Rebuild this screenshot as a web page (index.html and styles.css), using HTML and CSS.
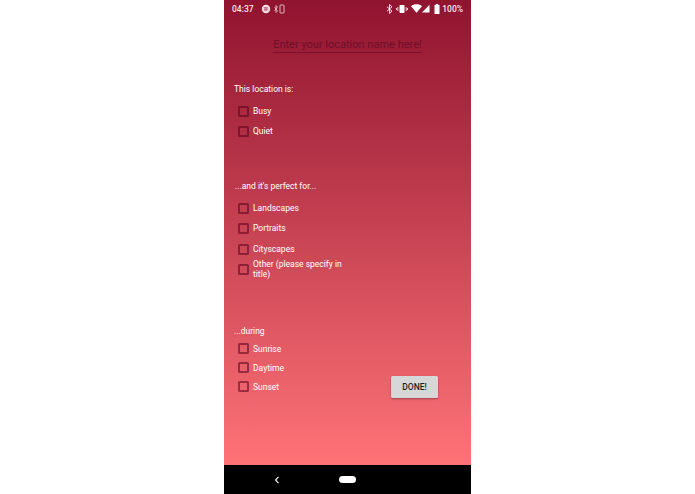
FILE: index.html
```html
<!DOCTYPE html>
<html lang="en">
<head>
    <meta charset="UTF-8">
    <meta name="viewport" content="width=device-width, initial-scale=1.0">
    <title>New location</title>
    <link rel="stylesheet" href="styles.css">
</head>
<body>
    <div class="phone">
        <div class="screen">
            <div class="status-bar">
                <div class="status-left">
                    <span class="clock">04:37</span>
                    <svg class="icon" width="10" height="10" viewBox="0 0 10 10"><circle cx="5" cy="5" r="4.2" fill="#f3dfe3"/><path d="M2.8 3.9c1.5-.4 3-.3 4.400.3M3 5.100c1.300-.3 2.600-.2 3.800.3M3.300 6.200c1-.2 2.100-.2 3 .3" stroke="#92183a" stroke-width=".7" fill="none"/></svg>
                    <svg class="icon" width="11" height="10" viewBox="0 0 11 10"><path d="M.5 3l3 4M3.500 3l-3 4M2 1.500v7l1.500-1.500M2 1.500l1.500 1.500" stroke="#f3dfe3" stroke-width=".7" fill="none"/><rect x="6" y="1" width="4" height="8" rx=".6" stroke="#f3dfe3" stroke-width=".8" fill="none"/></svg>
                </div>
                <div class="status-right">
                    <svg class="icon" width="7" height="10" viewBox="0 0 7 10"><path d="M1 2.800l5 4.400L3.500 9.500V.5L6 2.800l-5 4.400" stroke="#fff" stroke-width=".9" fill="none"/></svg>
                    <svg class="icon" width="12" height="10" viewBox="0 0 12 10"><rect x="3.500" y="1" width="5" height="8" rx=".8" fill="#fff"/><path d="M1.800 3v4M.5 4v2M10.200 3v4M11.500 4v2" stroke="#fff" stroke-width=".8"/></svg>
                    <svg class="icon" width="11" height="9" viewBox="0 0 11 9"><path d="M0 2.200C3 -.4 8 -.4 11 2.200L5.500 8.800z" fill="#fff"/></svg>
                    <svg class="icon signal" width="8" height="9" viewBox="0 0 8 9"><path d="M0 8.500L7.500 .8v7.700z" fill="#fff"/></svg>
                    <svg class="icon battery" width="6" height="10" viewBox="0 0 6 10"><path d="M1.800 0h2.400v1H5.500v9H.5V1h1.300z" fill="#fff"/></svg>
                    <span class="battery-text">100%</span>
                </div>
            </div>

            <div class="title-wrap">
                <div class="title-input">Enter your location name here!</div>
            </div>

            <div class="section section-busy">
                <p class="section-label">This location is:</p>
                <label class="check-row"><span class="box"></span>Busy</label>
                <label class="check-row"><span class="box"></span>Quiet</label>
            </div>

            <div class="section section-perfect">
                <p class="section-label label-inset">...and it's perfect for...</p>
                <label class="check-row"><span class="box"></span>Landscapes</label>
                <label class="check-row"><span class="box"></span>Portraits</label>
                <label class="check-row row-tall"><span class="box"></span>Cityscapes</label>
                <label class="check-row check-wrap"><span class="box"></span><span class="wrap-text">Other (please specify in title)</span></label>
            </div>

            <div class="section section-during">
                <p class="section-label">...during</p>
                <div class="during-body">
                    <div class="during-list">
                        <label class="check-row"><span class="box"></span>Sunrise</label>
                        <label class="check-row"><span class="box"></span>Daytime</label>
                        <label class="check-row"><span class="box"></span>Sunset</label>
                    </div>
                    <button class="done-btn">DONE!</button>
                </div>
            </div>
        </div>

        <div class="nav-bar">
            <svg class="nav-back" width="6" height="8" viewBox="0 0 6 8"><path d="M4.500 .8L1.500 4l3 3.200" stroke="#fff" stroke-width="1.100" fill="none"/></svg>
            <span class="nav-home"></span>
        </div>
    </div>
</body>
</html>
```

FILE: styles.css
```css
* {
    box-sizing: border-box;
}
body {
    margin: 0;
    height: 494px;
    overflow: hidden;
    background-color: #fff;
    font-family: Roboto, "Liberation Sans", sans-serif;
}
.phone {
    width: 247px;
    height: 494px;
    margin-left: 224px;
    display: flex;
    flex-direction: column;
}
.screen {
    height: 465px;
    background: linear-gradient(180deg, #90132f 0%, #ff7377 100%);
    color: #fff;
    font-size: 8.5px;
}
.status-bar {
    height: 17px;
    padding: 0 8px 0 8px;
    display: flex;
    justify-content: space-between;
    align-items: center;
    color: #f6e6e9;
    font-size: 8.5px;
    font-weight: 500;
}
.status-left, .status-right {
    display: flex;
    align-items: center;
}
.clock {
    margin-right: 7px;
}
.status-left .icon {
    margin-right: 3px;
}
.status-right .icon {
    margin-left: 3px;
}
.status-right .signal {
    margin-left: 0;
}
.status-right .battery {
    margin-left: 4px;
}
.battery-text {
    margin-left: 2px;
}
.title-wrap {
    padding-top: 20px;
    display: flex;
    justify-content: center;
}
.title-input {
    width: 149px;
    height: 16px;
    border-bottom: 1px solid #7a1030;
    color: #6e0f2b;
    font-size: 11px;
    line-height: 16px;
    white-space: nowrap;
    text-align: center;
}
.section {
    padding-left: 10px;
}
.section-label {
    margin: 0;
    height: 12px;
    line-height: 12px;
}
.label-inset {
    padding-left: 1px;
}
.section-busy {
    padding-top: 30px;
}
.section-busy .section-label {
    margin-bottom: 6px;
}
.section-perfect {
    padding-top: 39px;
}
.section-perfect .section-label {
    margin-bottom: 6px;
}
.section-during {
    padding-top: 46px;
}
.section-during .section-label {
    margin-bottom: 2px;
}
.check-row {
    height: 20px;
    padding-left: 4px;
    display: flex;
    align-items: center;
}
.row-tall {
    height: 21px;
    padding-top: 1px;
}
.section-during .check-row {
    height: 19px;
}
.box {
    width: 11px;
    height: 11px;
    margin-right: 4px;
    flex-shrink: 0;
    border: 2px solid rgba(90, 0, 28, 0.55);
    border-radius: 1.5px;
}
.wrap-text {
    width: 96px;
    line-height: 10px;
}
.during-body {
    display: flex;
    justify-content: space-between;
    align-items: flex-end;
}
.during-list {
    flex-grow: 1;
}
.done-btn {
    width: 47px;
    height: 22px;
    margin: 0 33px -2px 0;
    padding: 0;
    border: none;
    border-radius: 1.5px;
    background-color: #d6d7d7;
    box-shadow: 0 1px 2px rgba(0, 0, 0, 0.35);
    color: #1c1c1c;
    font-family: Roboto, "Liberation Sans", sans-serif;
    font-size: 8.5px;
    font-weight: 500;
}
.nav-bar {
    height: 29px;
    background-color: #000;
    position: relative;
}
.nav-back {
    position: absolute;
    left: 50px;
    top: 11px;
}
.nav-home {
    position: absolute;
    left: 115px;
    top: 11px;
    width: 17px;
    height: 7px;
    border-radius: 4px;
    background-color: #fff;
}
```
